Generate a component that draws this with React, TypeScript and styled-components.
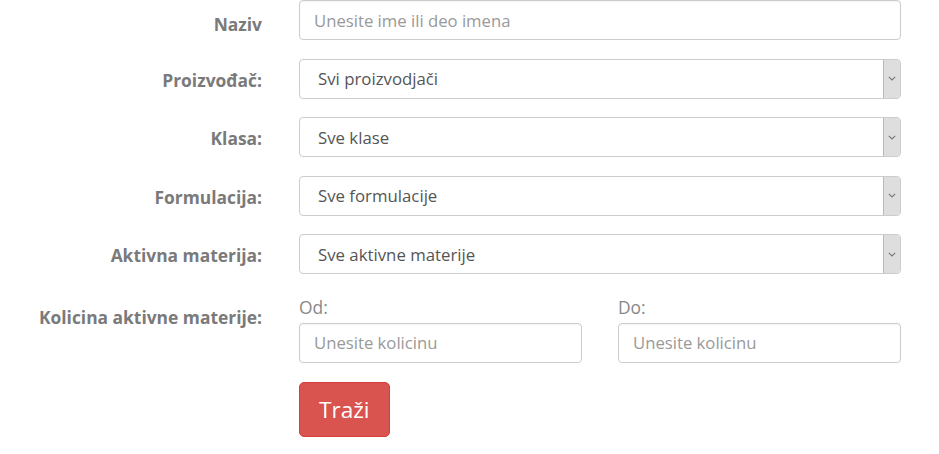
import { FC } from 'react';
import styled, { createGlobalStyle } from 'styled-components';

const GlobalStyle = createGlobalStyle`
  html, body {
    margin: 0;
    padding: 0;
    background: #fff;
  }
  body {
    font-family: 'Open Sans', 'Noto Sans', sans-serif;
  }
`;

const StyledForm = styled.form`
  display: flex;
  flex-direction: column;
  gap: 18.5px;
  width: 939px;
`;

const StyledRow = styled.div`
  display: grid;
  grid-template-columns: 262px 602px;
  column-gap: 37px;
  align-items: start;
`;

const StyledLabel = styled.label<{ offset?: number }>`
  text-align: right;
  font-weight: 700;
  font-size: 17.4px;
  line-height: 24px;
  color: #7a7a7a;
  padding-top: ${(props) => props.offset ?? 9}px;
`;

const StyledInput = styled.input`
  box-sizing: border-box;
  width: 100%;
  height: 40px;
  padding: 0 14px;
  border: 1px solid #ccc;
  border-radius: 4px;
  font-family: inherit;
  font-size: 16.7px;
  color: #555;
  background: #fff;
  outline: none;
  box-shadow: inset 0 1px 1px rgba(0, 0, 0, 0.04);

  &::placeholder {
    color: #999;
  }
`;

const SelectWrap = styled.div`
  position: relative;
  height: 40px;
`;

const StyledSelect = styled.select`
  box-sizing: border-box;
  width: 100%;
  height: 40px;
  padding: 0 24px 0 18px;
  border: 1px solid #ccc;
  border-radius: 4px;
  font-family: inherit;
  font-size: 16.8px;
  color: #555;
  background: #fff;
  appearance: none;
  outline: none;
`;

const SelectArrow = styled.span`
  position: absolute;
  top: 1px;
  right: 1px;
  bottom: 1px;
  width: 16px;
  display: flex;
  align-items: center;
  justify-content: center;
  background: #dedede;
  border-left: 1px solid #b9b9b9;
  border-radius: 0 3px 3px 0;
  pointer-events: none;
`;

const RangeGrid = styled.div`
  display: grid;
  grid-template-columns: 283px 283px;
  column-gap: 36px;
`;

const RangeField = styled.div`
  display: flex;
  flex-direction: column;
  gap: 5px;
`;

const SmallLabel = styled.span`
  padding-top: 3px;
  font-size: 17.4px;
  line-height: 22px;
  color: #888;
`;

const SubmitButton = styled.button`
  box-sizing: border-box;
  height: 55px;
  margin-top: 1px;
  padding: 0 19px;
  border: 1px solid #d43f3a;
  border-radius: 5px;
  background: #d9534f;
  color: #fff;
  font-family: inherit;
  font-size: 22.6px;
  cursor: pointer;
  justify-self: start;
`;

const Chevron: FC = () => (
  <svg width="8" height="5" viewBox="0 0 8 5">
    <path d="M0.8 0.8 L4 4 L7.2 0.8" fill="none" stroke="#777" strokeWidth="1.1" />
  </svg>
);

const SelectField: FC<{ value: string }> = ({ value }) => (
  <SelectWrap>
    <StyledSelect defaultValue={value}>
      <option value={value}>{value}</option>
    </StyledSelect>
    <SelectArrow>
      <Chevron />
    </SelectArrow>
  </SelectWrap>
);

const selects = [
  { label: 'Proizvođač:', value: 'Svi proizvodjači' },
  { label: 'Klasa:', value: 'Sve klase' },
  { label: 'Formulacija:', value: 'Sve formulacije' },
  { label: 'Aktivna materija:', value: 'Sve aktivne materije' },
];

const App: FC = () => (
  <>
    <GlobalStyle />
    <StyledForm onSubmit={(e) => e.preventDefault()}>
      <StyledRow>
        <StyledLabel offset={12}>Naziv</StyledLabel>
        <StyledInput placeholder="Unesite ime ili deo imena" />
      </StyledRow>
      {selects.map((s) => (
        <StyledRow key={s.label}>
          <StyledLabel>{s.label}</StyledLabel>
          <SelectField value={s.value} />
        </StyledRow>
      ))}
      <StyledRow>
        <StyledLabel offset={12}>Kolicina aktivne materije:</StyledLabel>
        <RangeGrid>
          <RangeField>
            <SmallLabel>Od:</SmallLabel>
            <StyledInput placeholder="Unesite kolicinu" />
          </RangeField>
          <RangeField>
            <SmallLabel>Do:</SmallLabel>
            <StyledInput placeholder="Unesite kolicinu" />
          </RangeField>
        </RangeGrid>
      </StyledRow>
      <StyledRow>
        <span />
        <SubmitButton type="submit">Traži</SubmitButton>
      </StyledRow>
    </StyledForm>
  </>
);

export default App;
